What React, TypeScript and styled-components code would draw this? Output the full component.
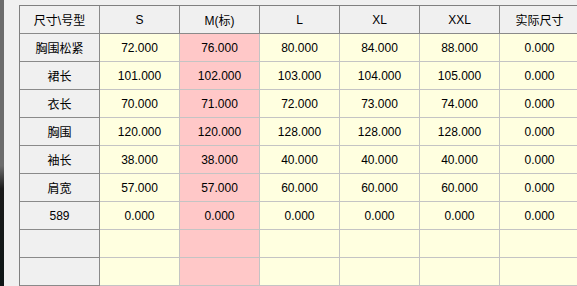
import * as React from 'react';
import styled, { createGlobalStyle } from 'styled-components';

const GlobalStyle = createGlobalStyle`
    html, body {
        margin: 0;
        padding: 0;
        overflow: hidden;
        background: #f0f0f0;
    }
`;

const Page = styled.div`
    display: flex;
    flex-direction: row;
    width: 577px;
    height: 286px;
    overflow: hidden;
    background: #f0f0f0;
    font-family: 'Liberation Sans', 'Noto Sans CJK SC', sans-serif;
    font-size: 12px;
    color: #000;
`;

const EdgeStrip = styled.div`
    flex: 0 0 4px;
    background: linear-gradient(
        to bottom,
        #6c6c6c 0%,
        #6c6c6c 58%,
        #1a1a1a 66%,
        #0e1616 100%
    );
`;

const Body = styled.div`
    flex: 1;
    padding: 5px 0 0 15px;
`;

const Grid = styled.div`
    display: grid;
    grid-template-columns: repeat(7, 80px);
    grid-auto-rows: 28px;
    border-top: 1px solid #808080;
    border-left: 1px solid #808080;
    width: max-content;
`;

type Tone = 'head' | 'plain' | 'mark';

const Cell = styled.div<{ $tone: Tone }>`
    box-sizing: border-box;
    display: flex;
    align-items: center;
    justify-content: center;
    white-space: nowrap;
    border-right: 1px solid ${(p) => (p.$tone === 'head' ? '#8a8a8a' : '#c4c4c4')};
    border-bottom: 1px solid ${(p) => (p.$tone === 'head' ? '#8a8a8a' : '#c4c4c4')};
    background: ${(p) =>
        p.$tone === 'head' ? '#f0f0f0' : p.$tone === 'mark' ? '#ffc8c8' : '#ffffe0'};
`;

const sizes = ['S', 'M(标)', 'L', 'XL', 'XXL', '实际尺寸'];
const baseIndex = 1;

const rows: { name: string; values: string[] }[] = [
    { name: '胸围松紧', values: ['72.000', '76.000', '80.000', '84.000', '88.000', '0.000'] },
    { name: '裙长', values: ['101.000', '102.000', '103.000', '104.000', '105.000', '0.000'] },
    { name: '衣长', values: ['70.000', '71.000', '72.000', '73.000', '74.000', '0.000'] },
    { name: '胸围', values: ['120.000', '120.000', '128.000', '128.000', '128.000', '0.000'] },
    { name: '袖长', values: ['38.000', '38.000', '40.000', '40.000', '40.000', '0.000'] },
    { name: '肩宽', values: ['57.000', '57.000', '60.000', '60.000', '60.000', '0.000'] },
    { name: '589', values: ['0.000', '0.000', '0.000', '0.000', '0.000', '0.000'] },
    { name: '', values: ['', '', '', '', '', ''] },
    { name: '', values: ['', '', '', '', '', ''] },
];

const SizeTable = () => (
    <Grid>
        <Cell $tone="head">{'尺寸\\号型'}</Cell>
        {sizes.map((s) => (
            <Cell key={s} $tone="head">
                {s}
            </Cell>
        ))}
        {rows.map((row, r) => (
            <React.Fragment key={r}>
                <Cell $tone="head">{row.name}</Cell>
                {row.values.map((v, c) => (
                    <Cell key={c} $tone={c === baseIndex ? 'mark' : 'plain'}>
                        {v}
                    </Cell>
                ))}
            </React.Fragment>
        ))}
    </Grid>
);

const App = () => (
    <>
        <GlobalStyle />
        <Page>
            <EdgeStrip />
            <Body>
                <SizeTable />
            </Body>
        </Page>
    </>
);

export default App;
